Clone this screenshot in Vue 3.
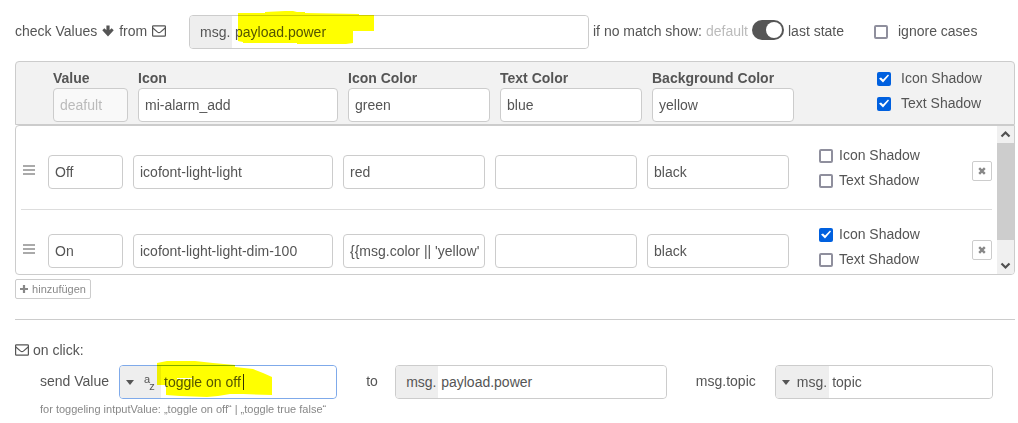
<script setup>
import { reactive, ref } from 'vue'

const source = ref('payload.power')
const keepLast = ref(true)
const ignoreCases = ref(false)

const columns = [
  { key: 'value', label: 'Value' },
  { key: 'icon', label: 'Icon' },
  { key: 'color', label: 'Icon Color' },
  { key: 'text', label: 'Text Color' },
  { key: 'background', label: 'Background Color' }
]

const defaults = reactive({
  value: '',
  icon: 'mi-alarm_add',
  color: 'green',
  text: 'blue',
  background: 'yellow',
  iconShadow: true,
  textShadow: true
})

const rows = reactive([
  { id: 1, value: 'Off', icon: 'icofont-light-light', color: 'red', text: '', background: 'black', iconShadow: false, textShadow: false },
  { id: 2, value: 'On', icon: 'icofont-light-light-dim-100', color: "{{msg.color || 'yellow'}}", text: '', background: 'black', iconShadow: true, textShadow: false }
])

const payload = ref('toggle on off')
const target = ref('payload.power')
const topic = ref('topic')

function addRow() {
  rows.push({ id: Date.now(), value: '', icon: '', color: '', text: '', background: '', iconShadow: false, textShadow: false })
}

function removeRow(index) {
  rows.splice(index, 1)
}
</script>

<template>
  <main class="editor">
    <div class="source-row">
      <label class="lead" for="source">
        <span>check Values</span>
        <svg class="arrow" width="12" height="12" viewBox="0 0 12 12"><path d="M4.4 0.5h3.2v4.6l2.1-1.8 2 2L6 11.4 0.3 5.3l2-2 2.1 1.8z" fill="#555" /></svg>
        <span class="from">from</span>
        <svg class="mail" width="14" height="12" viewBox="0 0 14 12"><g fill="none" stroke="#555" stroke-width="1.2"><rect x="0.6" y="0.8" width="12.8" height="10.4" rx="0.8" /><path d="M0.8 3l4.8 4.1q1.4 1.1 2.8 0L13.2 3" /></g></svg>
      </label>
      <div class="field grow">
        <span class="prefix">msg.</span>
        <input id="source" v-model="source" type="text" />
        <svg class="marker marker-source" width="138" height="35" viewBox="0 0 138 35"><path d="M2 3H29V2L49 1h8l4 1h8v1l54 1v1h15v16h-21v12l-7 1H61v-1H7v-1l-5-1z" fill="#ff0" /></svg>
      </div>
      <div class="fallback">
        <span>if no match show:</span>
        <span class="muted">default</span>
        <input v-model="keepLast" class="switch" type="checkbox" role="switch" aria-label="last state" />
        <span>last state</span>
      </div>
      <label class="check ignore"><input v-model="ignoreCases" type="checkbox" />ignore cases</label>
    </div>

    <section class="defaults">
      <div class="cells">
        <div v-for="col in columns" :key="col.key" class="cell">
          <label :for="'default-' + col.key">{{ col.label }}</label>
          <input :id="'default-' + col.key" v-model="defaults[col.key]" class="box" type="text" :placeholder="col.key === 'value' ? 'deafult' : ''" :disabled="col.key === 'value'" />
        </div>
      </div>
      <div class="checks">
        <label class="check"><input v-model="defaults.iconShadow" type="checkbox" />Icon Shadow</label>
        <label class="check"><input v-model="defaults.textShadow" type="checkbox" />Text Shadow</label>
      </div>
    </section>

    <section class="list">
      <ol class="items">
        <li v-for="(row, index) in rows" :key="row.id" class="item">
          <svg class="handle" width="12" height="11" viewBox="0 0 12 11"><path d="M0 0h12v2H0zM0 4h12v2H0zM0 8h12v2H0z" fill="#aaa" /></svg>
          <div class="cells">
            <input v-for="col in columns" :key="col.key" v-model="row[col.key]" class="box" type="text" :aria-label="col.label" />
          </div>
          <div class="checks">
            <label class="check"><input v-model="row.iconShadow" type="checkbox" />Icon Shadow</label>
            <label class="check"><input v-model="row.textShadow" type="checkbox" />Text Shadow</label>
          </div>
          <button class="small remove" type="button" aria-label="remove" @click="removeRow(index)">
            <svg width="8" height="8" viewBox="0 0 8 8"><path d="M1.2 1.2l5.6 5.6M6.8 1.2L1.2 6.8" stroke="#888" stroke-width="2.4" /></svg>
          </button>
        </li>
      </ol>
      <div class="scroll">
        <svg width="17" height="17" viewBox="0 0 17 17"><path d="M4.5 10.5l4-4 4 4" fill="none" stroke="#505050" stroke-width="2.2" /></svg>
        <div class="thumb"></div>
        <svg width="17" height="17" viewBox="0 0 17 17"><path d="M4.5 6.5l4 4 4-4" fill="none" stroke="#505050" stroke-width="2.2" /></svg>
      </div>
    </section>

    <button class="small add" type="button" @click="addRow">
      <svg width="8" height="8" viewBox="0 0 8 8"><path d="M4 0v8M0 4h8" stroke="#888" stroke-width="2.2" /></svg>
      hinzufügen
    </button>

    <hr />

    <h2 class="title">
      <svg class="mail" width="14" height="12" viewBox="0 0 14 12"><g fill="none" stroke="#555" stroke-width="1.2"><rect x="0.6" y="0.8" width="12.8" height="10.4" rx="0.8" /><path d="M0.8 3l4.8 4.1q1.4 1.1 2.8 0L13.2 3" /></g></svg>
      on click:
    </h2>

    <div class="click-row">
      <label class="send" for="payload">send Value</label>
      <div class="field typed focused">
        <button class="prefix type" type="button" aria-label="value type">
          <svg width="8" height="5" viewBox="0 0 8 5"><path d="M0 0h8L4 5z" fill="#555" /></svg>
          <span class="az"><span>a</span><span>z</span></span>
        </button>
        <input id="payload" v-model="payload" type="text" />
        <span class="caret"></span>
        <svg class="marker marker-payload" width="116" height="37" viewBox="0 0 116 37"><path d="M1 3l10-2h28l18 2 22 2v2l18 2 10 4 9 4v18l-29-1H74l-12 2-11 1-27-1-14-1V25H1zM21 18v1h15v-1z" fill="#ff0" fill-rule="evenodd" /></svg>
      </div>
      <label class="to" for="target">to</label>
      <div class="field wide">
        <span class="prefix">msg.</span>
        <input id="target" v-model="target" type="text" />
      </div>
      <label class="topic" for="topic">msg.topic</label>
      <div class="field typed">
        <button class="prefix type" type="button" aria-label="topic type">
          <svg width="8" height="5" viewBox="0 0 8 5"><path d="M0 0h8L4 5z" fill="#555" /></svg>
          <span>msg.</span>
        </button>
        <input id="topic" v-model="topic" type="text" />
      </div>
    </div>
    <p class="hint">for toggeling intputValue: „toggle on off“ | „toggle true false“</p>
  </main>
</template>

<style>
body {
  background: #fff;
}
</style>

<style scoped>
.editor {
  padding: 15px 3px 0 15px;
  color: #555;
  font: 14px/20px "Liberation Sans", Arial, sans-serif;
}

.editor *,
.editor {
  box-sizing: border-box;
}

input,
button {
  margin: 0;
  color: #555;
  font: inherit;
}

svg {
  display: block;
  flex: none;
}

.source-row,
.click-row {
  display: flex;
  align-items: center;
  height: 34px;
  white-space: nowrap;
}

.source-row > :not(.field),
.click-row > label {
  padding-bottom: 2px;
}

.lead {
  display: flex;
  align-items: center;
  flex: none;
  width: 174px;
}

.arrow {
  margin: 0 5px;
}

.from {
  margin-right: 5px;
}

.field {
  position: relative;
  display: flex;
  height: 34px;
  border: 1px solid #ccc;
  border-radius: 4px;
}

.field input {
  flex: 1;
  min-width: 0;
  padding: 0 3px;
  border: 0;
  outline: 0;
  border-radius: 4px;
  background: #fff;
}

.grow {
  flex: 1;
}

.prefix {
  flex: none;
  width: 42px;
  padding-left: 10px;
  border: 0;
  border-radius: 3px 0 0 3px;
  background: #eee;
  line-height: 32px;
}

.type {
  display: flex;
  align-items: center;
  gap: 7px;
  padding: 0 2px 0 6px;
}

.typed .type {
  width: auto;
  min-width: 41px;
}

.typed .type span {
  line-height: 32px;
}

.type .az {
  display: flex;
  gap: 0;
  margin-left: 3px;
  font-size: 11px;
}

.typed .az span {
  height: 32px;
  line-height: 26px;
}

.typed .az span + span {
  line-height: 40px;
  margin-left: -1px;
}

.focused {
  border-color: #7faaea;
}

.marker {
  position: absolute;
  pointer-events: none;
  mix-blend-mode: multiply;
}

.marker-source {
  left: 46px;
  top: -6px;
}

.marker-payload {
  left: 36px;
  top: -6px;
}

.caret {
  position: absolute;
  left: 123px;
  top: 8px;
  width: 1px;
  height: 16px;
  background: #333;
}

.fallback {
  display: flex;
  align-items: center;
  flex: none;
  gap: 4px;
  width: 285px;
  padding-left: 4px;
}

.muted {
  color: #bbb;
}

.switch {
  appearance: none;
  width: 32px;
  height: 20px;
  margin-bottom: 3px;
  padding: 2px;
  border-radius: 10px;
  background: #555;
}

.switch::before {
  content: "";
  display: block;
  width: 16px;
  height: 16px;
  border-radius: 50%;
  background: #fff;
}

.switch:checked::before {
  margin-left: auto;
}

.check {
  display: flex;
  align-items: center;
  gap: 6px;
  height: 25px;
  padding-bottom: 2px;
  white-space: nowrap;
}

.check input {
  appearance: none;
  flex: none;
  width: 14px;
  height: 14px;
  margin-top: 2px;
  border: 2px solid #8f8f9d;
  border-radius: 2px;
  background: #fff;
}

.check input:checked {
  border: 0;
  background: #0060df;
}

.check input:checked::before {
  content: "";
  display: block;
  width: 14px;
  height: 14px;
  background: #fff;
  clip-path: polygon(2px 7px, 4px 6px, 6px 8px, 11px 3px, 12px 4px, 6px 11px);
}

.ignore,
.defaults .check {
  gap: 10px;
}

.ignore {
  width: 141px;
}

.defaults {
  display: flex;
  height: 64px;
  margin-top: 12px;
  padding: 6px 33px 0 37px;
  border: 1px solid #ccc;
  border-radius: 4px 4px 0 0;
  background: #f2f2f2;
}

.cells {
  display: grid;
  grid-template-columns: 75fr 200fr 142fr 142fr 142fr;
  gap: 10px;
  flex: 1;
}

.cell {
  min-width: 0;
}

.cell label {
  display: block;
  font-weight: bold;
  white-space: nowrap;
}

.box {
  display: block;
  width: 100%;
  min-width: 0;
  height: 34px;
  padding: 0 5px 0 6px;
  border: 1px solid #ccc;
  border-radius: 4px;
  background: #fff;
}

.box:disabled {
  background: #f9f9f9;
}

.box::placeholder {
  color: #bbb;
}

.defaults .checks {
  width: 104px;
  margin: -2px 0 0 83px;
}

.list {
  display: flex;
  height: 150px;
  border: 1px solid #ccc;
  border-radius: 4px 0 4px 4px;
  overflow: hidden;
}

.items {
  flex: 1;
  margin: 0;
  padding: 5px;
  list-style: none;
}

.item {
  display: flex;
  align-items: center;
  height: 79px;
  padding-top: 4px;
  border-bottom: 1px solid #ddd;
}

.handle {
  margin: 0 13px 4px 2px;
}

.item .checks {
  width: 123px;
  margin: 0 0 8px 30px;
}

.small {
  display: flex;
  align-items: center;
  justify-content: center;
  gap: 4px;
  height: 20px;
  padding: 0;
  border: 1px solid #ccc;
  border-radius: 2px;
  background: #fff;
  color: #888;
  font-size: 11px;
}

.remove {
  width: 20px;
  margin: 0 0 2px 30px;
}

.scroll {
  display: flex;
  flex-direction: column;
  justify-content: space-between;
  width: 17px;
  background: #f0f0f0;
}

.thumb {
  height: 97px;
  margin-bottom: auto;
  background: #cdcdcd;
}

.add {
  width: 76px;
  margin-top: 4px;
}

hr {
  margin: 20px 0;
  border: 0;
  border-top: 1px solid #ccc;
}

.title {
  display: flex;
  align-items: center;
  gap: 4px;
  margin: 0;
  font-size: 14px;
  font-weight: normal;
}

.click-row {
  margin-top: 5px;
  padding: 0 22px 0 25px;
}

.send {
  width: 79px;
}

.typed {
  flex: 218;
  min-width: 0;
}

.wide {
  flex: 272;
  min-width: 0;
}

.to {
  width: 58px;
  padding-left: 29px;
}

.topic {
  width: 108px;
  padding-left: 29px;
}

.hint {
  margin: 0 0 0 25px;
  color: #888;
  font-size: 11px;
}
</style>
